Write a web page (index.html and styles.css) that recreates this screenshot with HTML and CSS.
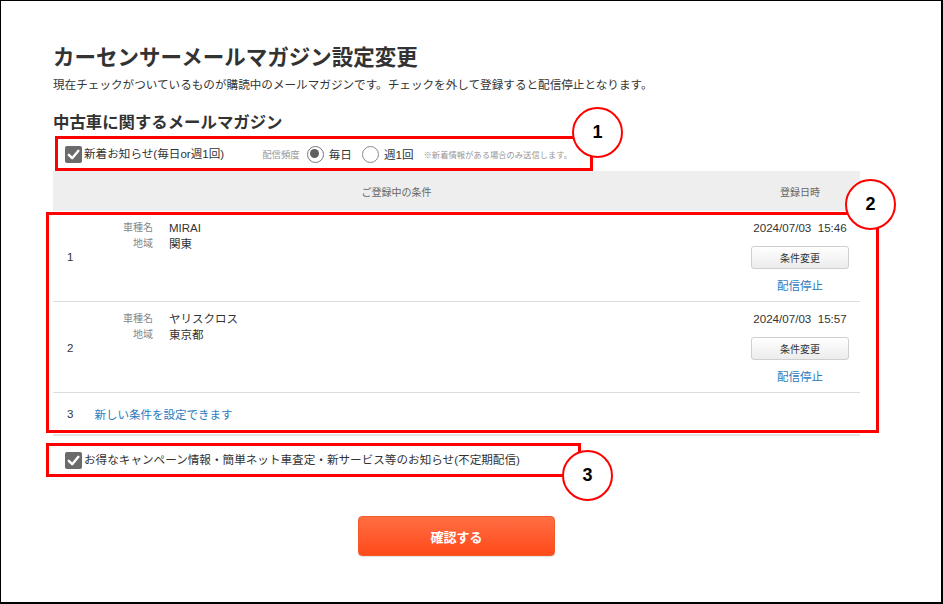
FILE: index.html
```html
<!DOCTYPE html>
<html lang="ja">
<head>
<meta charset="utf-8">
<title>カーセンサーメールマガジン設定変更</title>
<link rel="stylesheet" href="styles.css">
</head>
<body>
<div class="frame">
  <main class="page">
    <h1 class="title">カーセンサーメールマガジン設定変更</h1>
    <p class="lead">現在チェックがついているものが購読中のメールマガジンです。チェックを外して登録すると配信停止となります。</p>
    <h2 class="section">中古車に関するメールマガジン</h2>

    <div class="opt-row">
      <label class="check">
        <span class="cb"><svg viewBox="0 0 17 17" width="17" height="17"><path d="M3.8 8.8 L7.2 12.2 L13.4 4.8" fill="none" stroke="#fff" stroke-width="2.4" stroke-linecap="round" stroke-linejoin="round"/></svg></span>
        <span class="check-text">新着お知らせ(毎日or週1回)</span>
      </label>
      <span class="freq-label">配信頻度</span>
      <label class="radio"><span class="rb rb-on"></span><span class="radio-text">毎日</span></label>
      <label class="radio"><span class="rb"></span><span class="radio-text">週1回</span></label>
      <span class="note">※新着情報がある場合のみ送信します。</span>
    </div>

    <div class="table">
      <div class="thead">
        <div class="th th-cond">ご登録中の条件</div>
        <div class="th th-date">登録日時</div>
      </div>

      <div class="row">
        <div class="num">1</div>
        <dl class="cond">
          <dt>車種名</dt><dd>MIRAI</dd>
          <dt>地域</dt><dd>関東</dd>
        </dl>
        <div class="date-col">
          <div class="date">2024/07/03&nbsp;&nbsp;15:46</div>
          <button class="btn-change" type="button">条件変更</button>
          <a class="link stop" href="#">配信停止</a>
        </div>
      </div>

      <div class="row">
        <div class="num">2</div>
        <dl class="cond">
          <dt>車種名</dt><dd>ヤリスクロス</dd>
          <dt>地域</dt><dd>東京都</dd>
        </dl>
        <div class="date-col">
          <div class="date">2024/07/03&nbsp;&nbsp;15:57</div>
          <button class="btn-change" type="button">条件変更</button>
          <a class="link stop" href="#">配信停止</a>
        </div>
      </div>

      <div class="row-new">
        <span class="num-new">3</span>
        <a class="link" href="#">新しい条件を設定できます</a>
      </div>
    </div>

    <div class="opt-row opt-row2">
      <label class="check">
        <span class="cb"><svg viewBox="0 0 17 17" width="17" height="17"><path d="M3.8 8.8 L7.2 12.2 L13.4 4.8" fill="none" stroke="#fff" stroke-width="2.4" stroke-linecap="round" stroke-linejoin="round"/></svg></span>
        <span class="check-text">お得なキャンペーン情報・簡単ネット車査定・新サービス等のお知らせ(不定期配信)</span>
      </label>
    </div>

    <div class="actions">
      <button class="btn-confirm" type="button">確認する</button>
    </div>
  </main>

  <div class="annot box box1"></div>
  <div class="annot box box2"></div>
  <div class="annot box box3"></div>
  <div class="annot circle circle1">1</div>
  <div class="annot circle circle2">2</div>
  <div class="annot circle circle3">3</div>
</div>
</body>
</html>
```

FILE: styles.css
```css
* { box-sizing: border-box; }

html, body {
  margin: 0;
  padding: 0;
  background: #fff;
}

body {
  font-family: "Liberation Sans", "Noto Sans CJK JP", sans-serif;
  color: #333;
}

.frame {
  position: relative;
  width: 943px;
  height: 604px;
  border-style: solid;
  border-color: #000;
  border-width: 1px 2px 2px 1px;
  background: #fff;
  overflow: hidden;
}

.page {
  padding: 41px 0 0 52px;
}

.title {
  margin: 0;
  font-family: "Noto Sans CJK JP", sans-serif;
  font-size: 21.5px;
  line-height: 28px;
  font-weight: 700;
  color: #333;
}

.lead {
  margin: 6px 0 0;
  font-family: "Noto Sans CJK JP", sans-serif;
  font-size: 11.6px;
  line-height: 16px;
  color: #333;
}

.section {
  margin: 18px 0 0;
  font-family: "Noto Sans CJK JP", sans-serif;
  font-size: 16.4px;
  line-height: 22px;
  font-weight: 700;
  color: #333;
}

/* option rows */
.opt-row {
  margin-top: 5px;
  height: 34px;
  padding-left: 12px;
  display: flex;
  align-items: center;
}

.check {
  display: flex;
  align-items: center;
  gap: 2px;
}

.cb {
  width: 17px;
  height: 17px;
  border-radius: 2px;
  background: #6b6b6b;
  display: block;
}

.cb svg { display: block; }

.check-text {
  font-size: 11.6px;
  line-height: 16px;
  color: #333;
}

.freq-label {
  margin-left: 38px;
  font-size: 9.4px;
  color: #999;
}

.radio {
  display: flex;
  align-items: center;
  gap: 5px;
  margin-left: 7px;
}

.radio + .radio { margin-left: 10px; }

.rb {
  width: 17px;
  height: 17px;
  border-radius: 50%;
  border: 1px solid #8a8a8a;
  background: #fff;
  position: relative;
  display: block;
}

.rb-on {
  border: 1.5px solid #777;
}

.rb-on::after {
  content: "";
  position: absolute;
  left: 2.5px;
  top: 2.5px;
  width: 9px;
  height: 9px;
  border-radius: 50%;
  background: #5e5e5e;
}

.radio-text {
  font-size: 11.6px;
  color: #333;
}

.note {
  margin-left: 10px;
  font-size: 8.3px;
  color: #999;
}

/* table */
.table {
  width: 807px;
}

.thead {
  height: 40px;
  background: #eeeeee;
  display: grid;
  grid-template-columns: 1fr 120px;
  align-items: center;
}

.th {
  text-align: center;
  font-size: 10px;
  color: #666;
}

.row {
  display: grid;
  grid-template-columns: 40px 1fr 120px;
  border-bottom: 1px solid #dcdcdc;
  padding: 9px 0 8px;
}

.num {
  align-self: center;
  padding-left: 14px;
  font-size: 11.5px;
  color: #333;
}

.cond {
  margin: 0;
  display: grid;
  grid-template-columns: 60px 1fr;
  column-gap: 16px;
  align-content: start;
}

.cond dt {
  text-align: right;
  font-size: 10px;
  line-height: 16px;
  color: #888;
}

.cond dd {
  margin: 0;
  font-size: 11.5px;
  line-height: 16px;
  color: #333;
}

.date-col {
  display: flex;
  flex-direction: column;
  align-items: center;
}

.date {
  font-size: 11.6px;
  line-height: 16px;
  color: #333;
}

.btn-change {
  margin-top: 10px;
  width: 98px;
  height: 23px;
  border: 1px solid #cfcfcf;
  border-radius: 3px;
  background: linear-gradient(#ffffff, #ececec);
  font-family: "Noto Sans CJK JP", sans-serif;
  font-size: 10px;
  color: #333;
  padding: 0;
}

.link {
  font-family: "Noto Sans CJK JP", sans-serif;
  font-size: 11.5px;
  line-height: 16px;
  color: #2b7bc0;
  text-decoration: none;
}

.stop { margin-top: 8px; }

.row-new {
  height: 43px;
  display: flex;
  align-items: center;
  gap: 21px;
  padding-left: 14px;
  border-bottom: 2px solid #e4e4e4;
}

.num-new {
  font-size: 11.5px;
  color: #333;
}

.opt-row2 {
  margin-top: 7px;
}

.actions {
  width: 807px;
  margin-top: 39px;
  display: flex;
  justify-content: center;
}

.btn-confirm {
  width: 197px;
  height: 40px;
  border: 1px solid #f25a2a;
  border-radius: 4px;
  background: linear-gradient(#ff6e42, #ff4a1b);
  color: #fff;
  font-family: "Noto Sans CJK JP", sans-serif;
  font-weight: 700;
  font-size: 13px;
  padding: 0;
  box-shadow: 0 1px 1px rgba(0, 0, 0, 0.12);
}

/* annotations overlay */
.annot {
  position: absolute;
}

.box {
  border: 3px solid #ff0000;
}

.box1 { left: 54px; top: 135px; width: 538px; height: 35px; }
.box2 { left: 45px; top: 211px; width: 833px; height: 221px; }
.box3 { left: 45px; top: 442px; width: 535px; height: 34px; }

.circle {
  width: 51px;
  height: 51px;
  border-radius: 50%;
  border: 2px solid #ff0000;
  background: #fff;
  display: flex;
  align-items: center;
  justify-content: center;
  font-family: "Liberation Sans", sans-serif;
  font-weight: 700;
  font-size: 18px;
  color: #000;
}

.circle1 { left: 571px; top: 106px; }
.circle2 { left: 844px; top: 178px; }
.circle3 { left: 561px; top: 449px; }
```
